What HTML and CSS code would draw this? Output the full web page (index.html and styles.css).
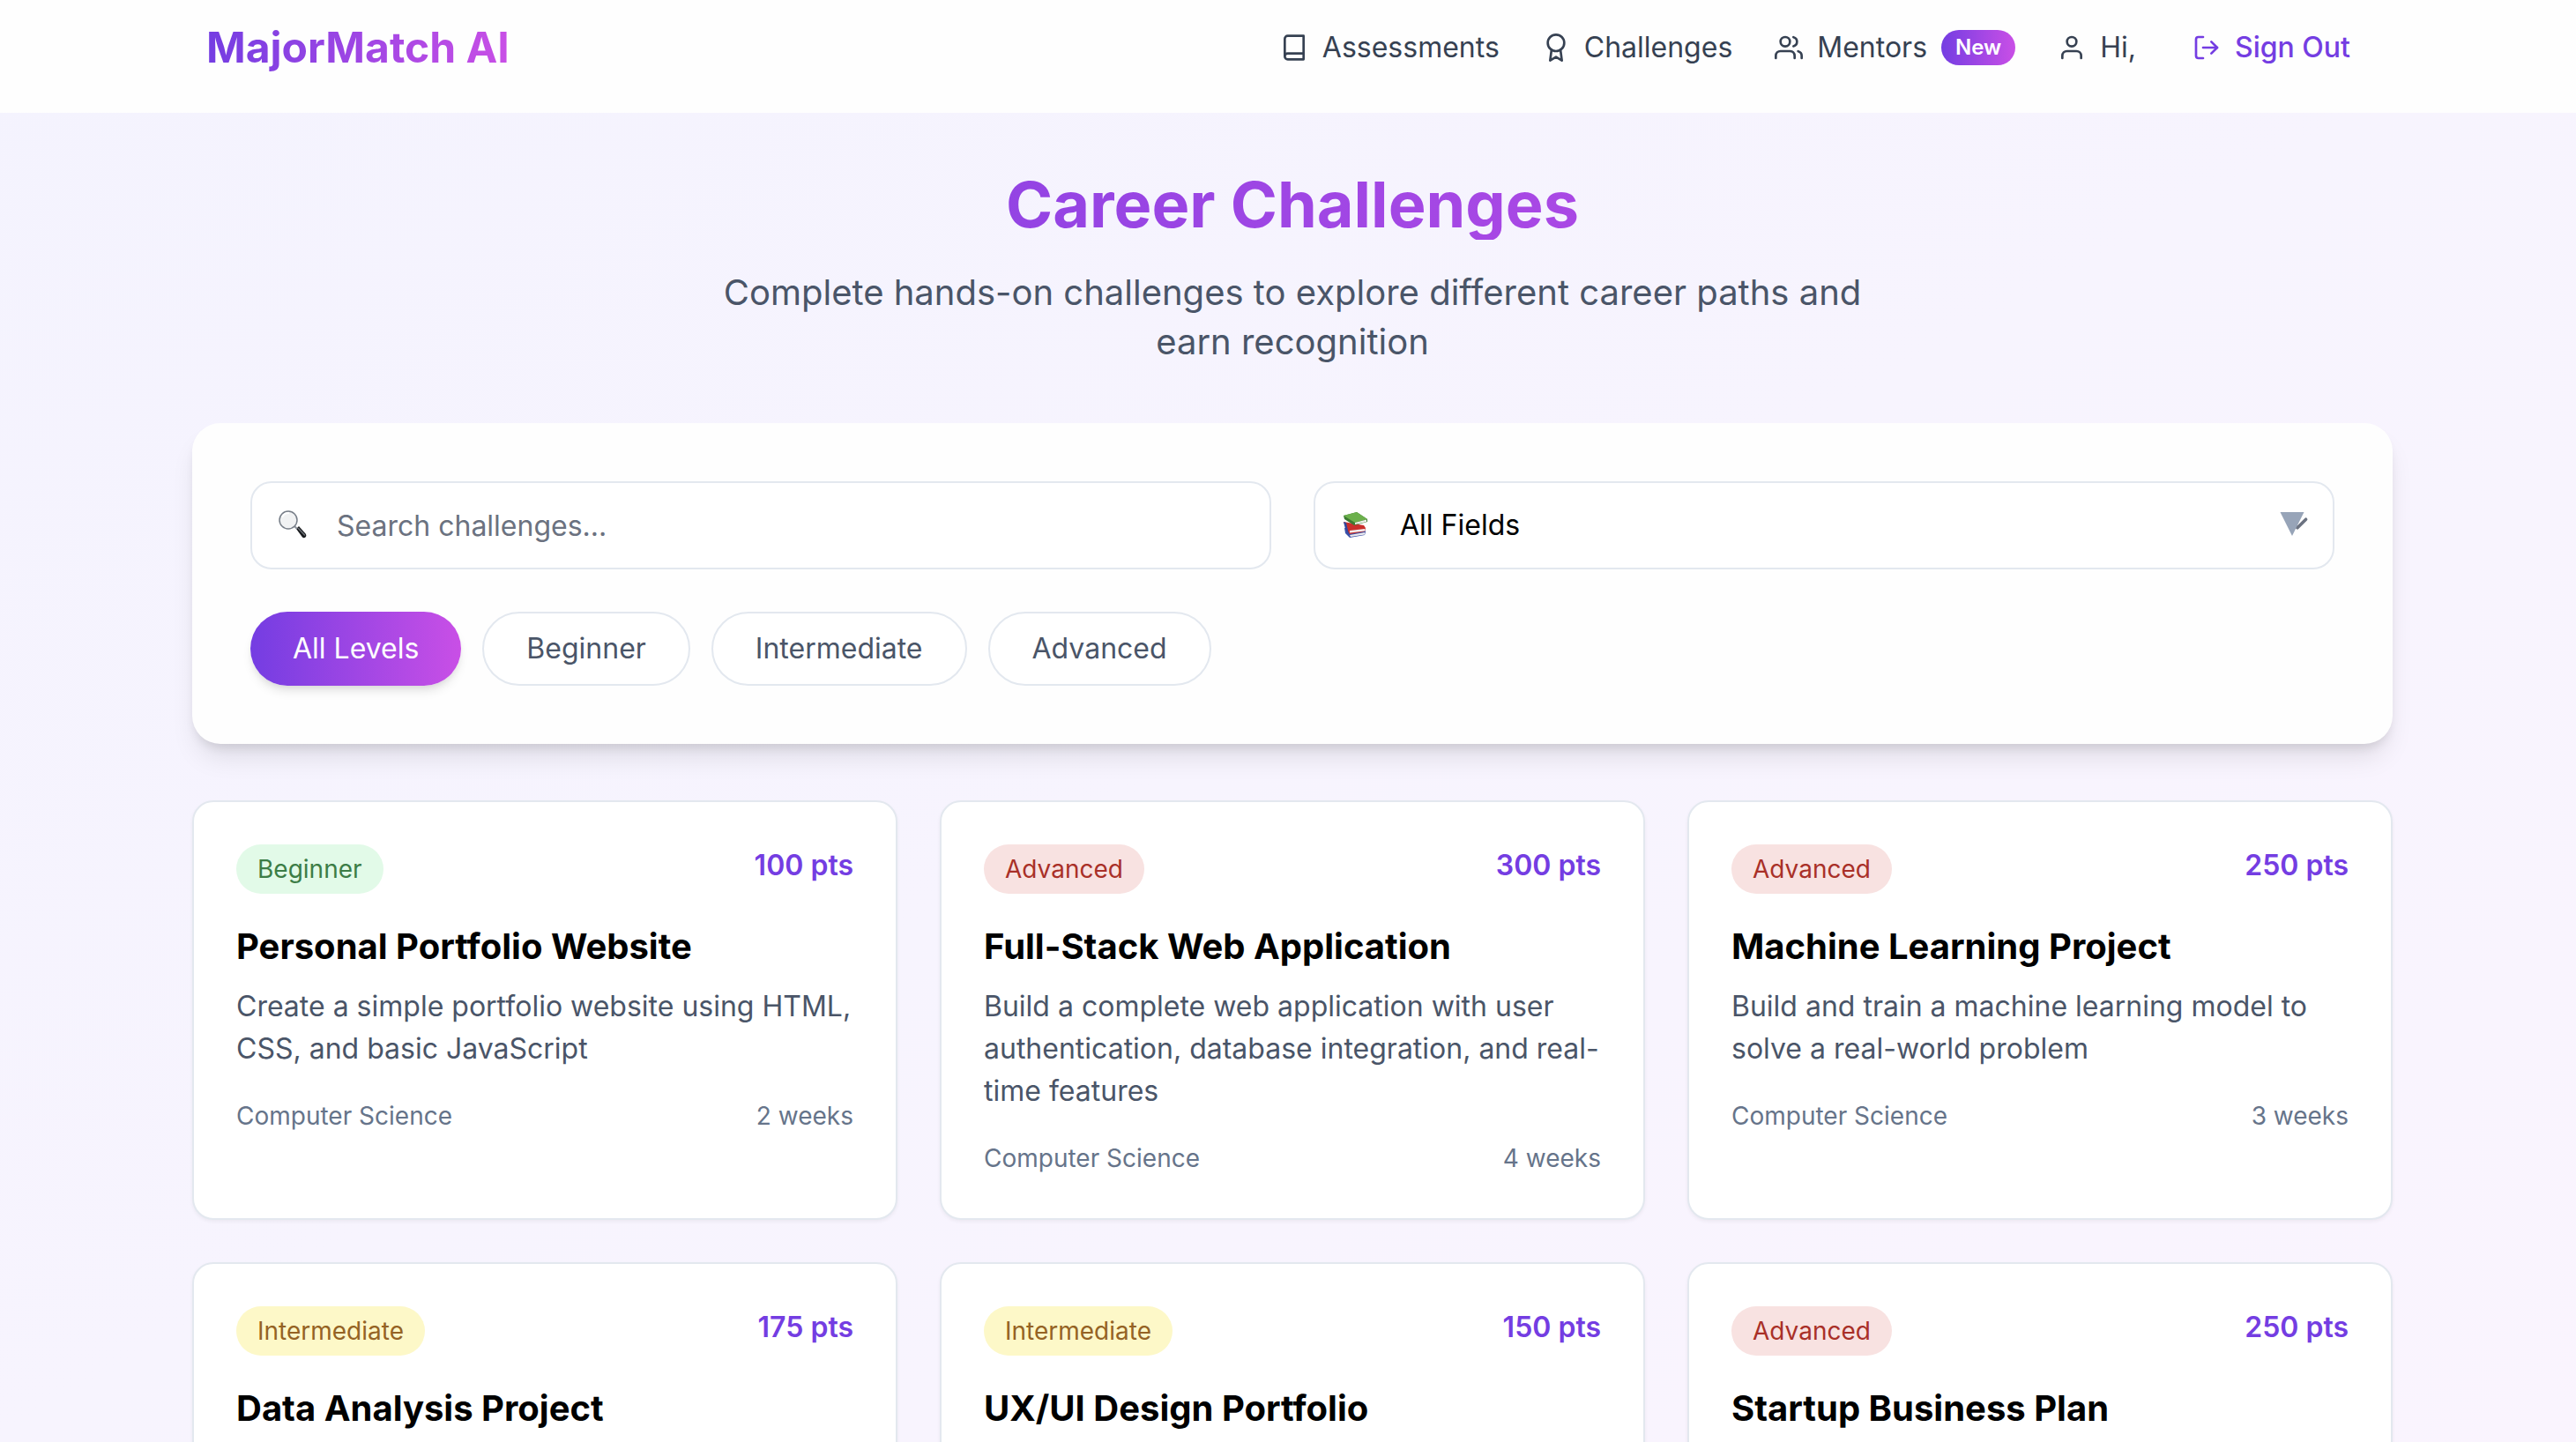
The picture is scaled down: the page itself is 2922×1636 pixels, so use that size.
FILE: index.html
```html
<!DOCTYPE html>
<html lang="en">
<head>
<meta charset="utf-8">
<meta name="viewport" content="width=device-width, initial-scale=1">
<title>Career Challenges - MajorMatch AI</title>
<link rel="stylesheet" href="styles.css">
</head>
<body>
<div class="page">
  <header class="header">
    <div class="header-inner">
      <a class="logo" href="#">MajorMatch AI</a>
      <nav class="nav" aria-label="Main">
        <a class="nav-link" href="#">
          <svg class="icon" viewBox="0 0 24 24" aria-hidden="true"><path d="M4 19.5v-15A2.5 2.5 0 0 1 6.5 2H20v20H6.5a2.5 2.5 0 0 1 0-5H20"/></svg>
          Assessments
        </a>
        <a class="nav-link" href="#">
          <svg class="icon" viewBox="0 0 24 24" aria-hidden="true"><circle cx="12" cy="8" r="7"/><path d="M8.21 13.89 7 23l5-3 5 3-1.21-9.12"/></svg>
          Challenges
        </a>
        <a class="nav-link" href="#">
          <svg class="icon" viewBox="0 0 24 24" aria-hidden="true"><path d="M17 21v-2a4 4 0 0 0-4-4H5a4 4 0 0 0-4 4v2"/><circle cx="9" cy="7" r="4"/><path d="M23 21v-2a4 4 0 0 0-3-3.87"/><path d="M16 3.13a4 4 0 0 1 0 7.75"/></svg>
          Mentors
          <span class="new-tag">New</span>
        </a>
        <div class="account">
          <a class="nav-link" href="#">
            <svg class="icon" viewBox="0 0 24 24" aria-hidden="true"><path d="M20 21v-2a4 4 0 0 0-4-4H8a4 4 0 0 0-4 4v2"/><circle cx="12" cy="7" r="4"/></svg>
            Hi,
          </a>
          <button class="sign-out" type="button">
            <svg class="icon" viewBox="0 0 24 24" aria-hidden="true"><path d="M9 21H5a2 2 0 0 1-2-2V5a2 2 0 0 1 2-2h4"/><path d="m16 17 5-5-5-5"/><path d="M21 12H9"/></svg>
            Sign Out
          </button>
        </div>
      </nav>
    </div>
  </header>

  <main class="main">
    <div class="intro">
      <h1 class="intro-title">Career Challenges</h1>
      <p class="intro-text">Complete hands-on challenges to explore different career paths and earn recognition</p>
    </div>

    <section class="filters" aria-label="Filters">
      <div class="fields">
        <div class="field">
          <input class="control" type="search" placeholder="Search challenges..." aria-label="Search challenges">
          <svg class="field-icon" viewBox="0 0 32 32" aria-hidden="true">
            <path d="M20 21l3-3 8 9q1 2-.5 3.500q-2 1.500-3.500 0z" fill="#17191c"/>
            <path d="M22.500 20.500l7 7.500" stroke="#6b7076" stroke-width="1.500" stroke-linecap="round"/>
            <path d="M18 18l3 3" stroke="#8d939b" stroke-width="2"/>
            <circle cx="11" cy="11" r="10" fill="#f1f2f3" stroke="#777e88" stroke-width="1.500"/>
            <path d="M4 8a8 8 0 0 1 8-5" fill="none" stroke="#fff" stroke-width="2"/>
          </svg>
        </div>
        <div class="field">
          <select class="control" aria-label="Field">
            <option>All Fields</option>
          </select>
          <svg class="field-icon" viewBox="0 0 32 32" aria-hidden="true">
            <path d="M3 20l1 6 5 5 17-3 1-4-2-3z" fill="#3a50a8"/>
            <path d="M9 28l17-3v2.500L10 30z" fill="#e9e9ec"/>
            <path d="M2 13l3 8 4 6 17-3 1-4-2-3z" fill="#c9302c"/>
            <path d="M2 13l2 8 4 6-3-13z" fill="#32479d"/>
            <path d="M9 23l17-2v2.500L9 25.500z" fill="#f3eeee"/>
            <path d="M2 6l15-4 12 8v3l-15 4L3 10z" fill="#3b7a32"/>
            <path d="M2 6l15-4 12 8-14 4z" fill="#6cb04c"/>
            <path d="M15 14l13-3.500v2.500l-13 3z" fill="#f0f1ec"/>
          </svg>
          <svg class="field-arrow" viewBox="0 0 48 48" aria-hidden="true">
            <path d="M14.400 19.200l9.600 9.600 9.600-9.600" fill="none" stroke="#6b7280" stroke-width="3.600" stroke-linecap="round" stroke-linejoin="round"/>
            <path d="M4.500 11h27L18 38z" fill="#97a4b8"/>
          </svg>
        </div>
      </div>
      <div class="levels">
        <button class="level level-active" type="button" aria-pressed="true">All Levels</button>
        <button class="level" type="button">Beginner</button>
        <button class="level" type="button">Intermediate</button>
        <button class="level" type="button">Advanced</button>
      </div>
    </section>

    <section class="cards" aria-label="Challenges">
      <article class="card">
        <div class="card-top"><span class="badge badge-beginner">Beginner</span><span class="points">100 pts</span></div>
        <h2 class="card-title">Personal Portfolio Website</h2>
        <p class="card-text">Create a simple portfolio website using HTML, CSS, and basic JavaScript</p>
        <div class="card-meta"><span>Computer Science</span><span>2 weeks</span></div>
      </article>
      <article class="card">
        <div class="card-top"><span class="badge badge-advanced">Advanced</span><span class="points">300 pts</span></div>
        <h2 class="card-title">Full-Stack Web Application</h2>
        <p class="card-text">Build a complete web application with user authentication, database integration, and real-time features</p>
        <div class="card-meta"><span>Computer Science</span><span>4 weeks</span></div>
      </article>
      <article class="card">
        <div class="card-top"><span class="badge badge-advanced">Advanced</span><span class="points">250 pts</span></div>
        <h2 class="card-title">Machine Learning Project</h2>
        <p class="card-text">Build and train a machine learning model to solve a real-world problem</p>
        <div class="card-meta"><span>Computer Science</span><span>3 weeks</span></div>
      </article>
      <article class="card">
        <div class="card-top"><span class="badge badge-intermediate">Intermediate</span><span class="points">175 pts</span></div>
        <h2 class="card-title">Data Analysis Project</h2>
      </article>
      <article class="card">
        <div class="card-top"><span class="badge badge-intermediate">Intermediate</span><span class="points">150 pts</span></div>
        <h2 class="card-title">UX/UI Design Portfolio</h2>
      </article>
      <article class="card">
        <div class="card-top"><span class="badge badge-advanced">Advanced</span><span class="points">250 pts</span></div>
        <h2 class="card-title">Startup Business Plan</h2>
      </article>
    </section>
  </main>
</div>
</body>
</html>
```

FILE: styles.css
```css
:root {
  --violet: #743de2;
  --pink: #c94fe6;
  --brand: linear-gradient(to right, var(--violet), var(--pink));
  --line: #e3e8ef;
  --slate-700: #364152;
  --slate-600: #4a5568;
  --slate-500: #66748a;
}

* {
  box-sizing: border-box;
}

body {
  margin: 0;
  font-family: Inter, "Liberation Sans", sans-serif;
  font-size: 32px;
  line-height: 48px;
  color: #000;
}

h1, h2, p {
  margin: 0;
}

button, input, select {
  font: inherit;
}

.page {
  height: 100vh;
  overflow: hidden;
  background: linear-gradient(to bottom right, #f4f3fe, #f7f4fe 50%, #faf4fe);
}

/* Header */
.header {
  padding: 18px 0 38px 10px;
  background: #fefefe;
}

.header-inner {
  display: flex;
  align-items: center;
  justify-content: space-between;
  max-width: 2464px;
  height: 72px;
  margin: 0 auto;
}

.logo {
  font-size: 48px;
  line-height: 64px;
  font-weight: 700;
  text-decoration: none;
  color: transparent;
  background: var(--brand);
  -webkit-background-clip: text;
  background-clip: text;
}

.nav {
  display: flex;
  align-items: center;
  gap: 48px;
}

.nav-link {
  display: flex;
  align-items: center;
  gap: 16px;
  color: var(--slate-700);
  text-decoration: none;
}

.icon {
  width: 32px;
  height: 32px;
  fill: none;
  stroke: currentColor;
  stroke-width: 2;
  stroke-linecap: round;
  stroke-linejoin: round;
}

.new-tag {
  padding: 4px 16px;
  border-radius: 20px;
  background: var(--brand);
  color: #fff;
  font-size: 24px;
  line-height: 32px;
  font-weight: 600;
}

.account {
  display: flex;
  align-items: center;
  gap: 32px;
}

.sign-out {
  display: flex;
  align-items: center;
  gap: 16px;
  padding: 12px 32px;
  border: 0;
  background: none;
  color: var(--violet);
  font-weight: 500;
}

/* Page body */
.main {
  display: flex;
  flex-direction: column;
  gap: 64px;
  max-width: 2506px;
  margin: 0 auto;
  padding: 64px 0 64px 10px;
}

.intro {
  display: flex;
  flex-direction: column;
  gap: 32px;
  text-align: center;
}

.intro-title {
  font-size: 72px;
  line-height: 80px;
  font-weight: 700;
  color: transparent;
  background: var(--brand);
  -webkit-background-clip: text;
  background-clip: text;
}

.intro-text {
  max-width: 1344px;
  margin: 0 auto;
  font-size: 40px;
  line-height: 56px;
  color: var(--slate-600);
}

/* Filters */
.filters {
  display: flex;
  flex-direction: column;
  gap: 48px;
  padding: 66px;
  border-radius: 32px;
  background: #fefefe;
  box-shadow: 0 20px 30px -6px rgba(0, 0, 0, 0.1), 0 8px 12px -4px rgba(0, 0, 0, 0.1);
}

.fields {
  display: grid;
  grid-template-columns: 1fr 1fr;
  gap: 48px;
}

.field {
  position: relative;
}

.control {
  display: block;
  width: 100%;
  height: 100px;
  padding: 0 96px;
  border: 2px solid var(--line);
  border-radius: 24px;
  background: #fff;
  color: #000;
  -webkit-appearance: none;
  appearance: none;
}

.control::placeholder {
  color: #6b7280;
  opacity: 1;
}

.field-icon {
  position: absolute;
  left: 32px;
  top: 33px;
  width: 32px;
  height: 32px;
  pointer-events: none;
}

.field-arrow {
  position: absolute;
  right: 18px;
  top: 24px;
  width: 48px;
  height: 48px;
  pointer-events: none;
}

.levels {
  display: flex;
  gap: 24px;
}

.level {
  padding: 16px 48px;
  border: 2px solid var(--line);
  border-radius: 42px;
  background: #fff;
  color: var(--slate-600);
}

.level-active {
  border: 0;
  background: var(--brand);
  color: #fff;
  box-shadow: 0 8px 12px -2px rgba(0, 0, 0, 0.1), 0 4px 8px -4px rgba(0, 0, 0, 0.1);
}

/* Cards */
.cards {
  display: grid;
  grid-template-columns: repeat(3, 1fr);
  grid-auto-rows: minmax(476px, auto);
  gap: 48px;
}

.card {
  padding: 48px;
  border: 2px solid var(--line);
  border-radius: 24px;
  background: #fff;
  box-shadow: 0 2px 4px rgba(0, 0, 0, 0.05);
}

.card-top {
  display: flex;
  align-items: flex-start;
  justify-content: space-between;
  margin-bottom: 32px;
}

.badge {
  padding: 8px 24px;
  border-radius: 28px;
  font-size: 28px;
  line-height: 40px;
}

.badge-beginner {
  background: #e2fae8;
  color: #3c7d46;
}

.badge-intermediate {
  background: #fdf8c8;
  color: #956324;
}

.badge-advanced {
  background: #f8e2e1;
  color: #a93028;
}

.points {
  font-weight: 600;
  color: var(--violet);
}

.card-title {
  margin-bottom: 16px;
  font-size: 40px;
  line-height: 56px;
  font-weight: 700;
}

.card-text {
  margin-bottom: 32px;
  color: var(--slate-600);
}

.card-meta {
  display: flex;
  justify-content: space-between;
  font-size: 28px;
  line-height: 40px;
  color: var(--slate-500);
}
```
